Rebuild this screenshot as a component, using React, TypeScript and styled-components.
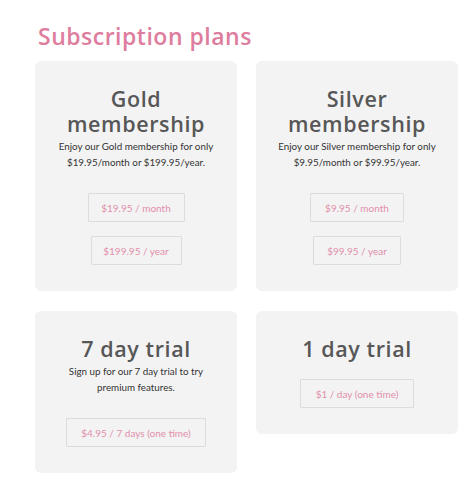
import React from "react";
import styled, { createGlobalStyle } from "styled-components";

const Global = createGlobalStyle`
  html, body { margin: 0; padding: 0; background: #ffffff; }
  body { font-family: "Lato", "Open Sans", sans-serif; }
`;

const Page = styled.main`
  width: 472px;
  padding: 20px 0 0 35px;
  box-sizing: border-box;
`;

const Heading = styled.h1`
  margin: 0 0 8px 3px;
  font-family: "Open Sans", sans-serif;
  font-weight: 600;
  font-size: 23px;
  line-height: 33px;
  color: #de7d9d;
  letter-spacing: 0.5px;
`;

const Grid = styled.div`
  display: grid;
  grid-template-columns: 202px 202px;
  column-gap: 19px;
  row-gap: 20px;
  align-items: start;
`;

const Card = styled.section<{ $stretch?: boolean }>`
  background: #f3f3f4;
  border-radius: 6px;
  padding: 25px 8px 26px;
  display: flex;
  flex-direction: column;
  align-items: center;
  text-align: center;
  align-self: ${(p) => (p.$stretch ? "stretch" : "start")};
  box-sizing: border-box;
`;

const Title = styled.h2`
  margin: 0;
  font-family: "Open Sans", sans-serif;
  font-weight: 600;
  font-size: 21.5px;
  line-height: 25px;
  letter-spacing: 0.6px;
  color: #575757;
`;

const Desc = styled.p`
  margin: 2px 0 5px;
  font-size: 9.8px;
  line-height: 16px;
  color: #333333;
`;

const Buttons = styled.div`
  margin-top: 18px;
  display: flex;
  flex-direction: column;
  align-items: center;
  gap: 14px;
`;

const PriceButton = styled.button<{ $w: number }>`
  width: ${(p) => p.$w}px;
  height: 29px;
  background: transparent;
  border: 1px solid #dcdcdc;
  border-radius: 1px;
  font-family: "Lato", sans-serif;
  font-size: 10px;
  color: #e28fa9;
  padding: 0;
  cursor: pointer;
`;

type Plan = {
  title: string[];
  desc?: string[];
  prices: { label: string; w: number }[];
  stretch?: boolean;
};

const plans: Plan[] = [
  {
    title: ["Gold", "membership"],
    desc: ["Enjoy our Gold membership for only", "$19.95/month or $199.95/year."],
    prices: [
      { label: "$19.95 / month", w: 97 },
      { label: "$199.95 / year", w: 91 },
    ],
    stretch: true,
  },
  {
    title: ["Silver", "membership"],
    desc: ["Enjoy our Silver membership for only", "$9.95/month or $99.95/year."],
    prices: [
      { label: "$9.95 / month", w: 94 },
      { label: "$99.95 / year", w: 88 },
    ],
    stretch: true,
  },
  {
    title: ["7 day trial"],
    desc: ["Sign up for our 7 day trial to try", "premium features."],
    prices: [{ label: "$4.95 / 7 days (one time)", w: 140 }],
  },
  {
    title: ["1 day trial"],
    prices: [{ label: "$1 / day (one time)", w: 114 }],
  },
];

export default function App() {
  return (
    <>
      <Global />
      <Page>
        <Heading>Subscription plans</Heading>
        <Grid>
          {plans.map((p) => (
            <Card key={p.title.join(" ")} $stretch={p.stretch}>
              <Title>
                {p.title.map((t, i) => (
                  <React.Fragment key={t}>
                    {i > 0 && <br />}
                    {t}
                  </React.Fragment>
                ))}
              </Title>
              {p.desc && (
                <Desc>
                  {p.desc[0]}
                  <br />
                  {p.desc[1]}
                </Desc>
              )}
              <Buttons>
                {p.prices.map((pr) => (
                  <PriceButton key={pr.label} $w={pr.w}>
                    {pr.label}
                  </PriceButton>
                ))}
              </Buttons>
            </Card>
          ))}
        </Grid>
      </Page>
    </>
  );
}
